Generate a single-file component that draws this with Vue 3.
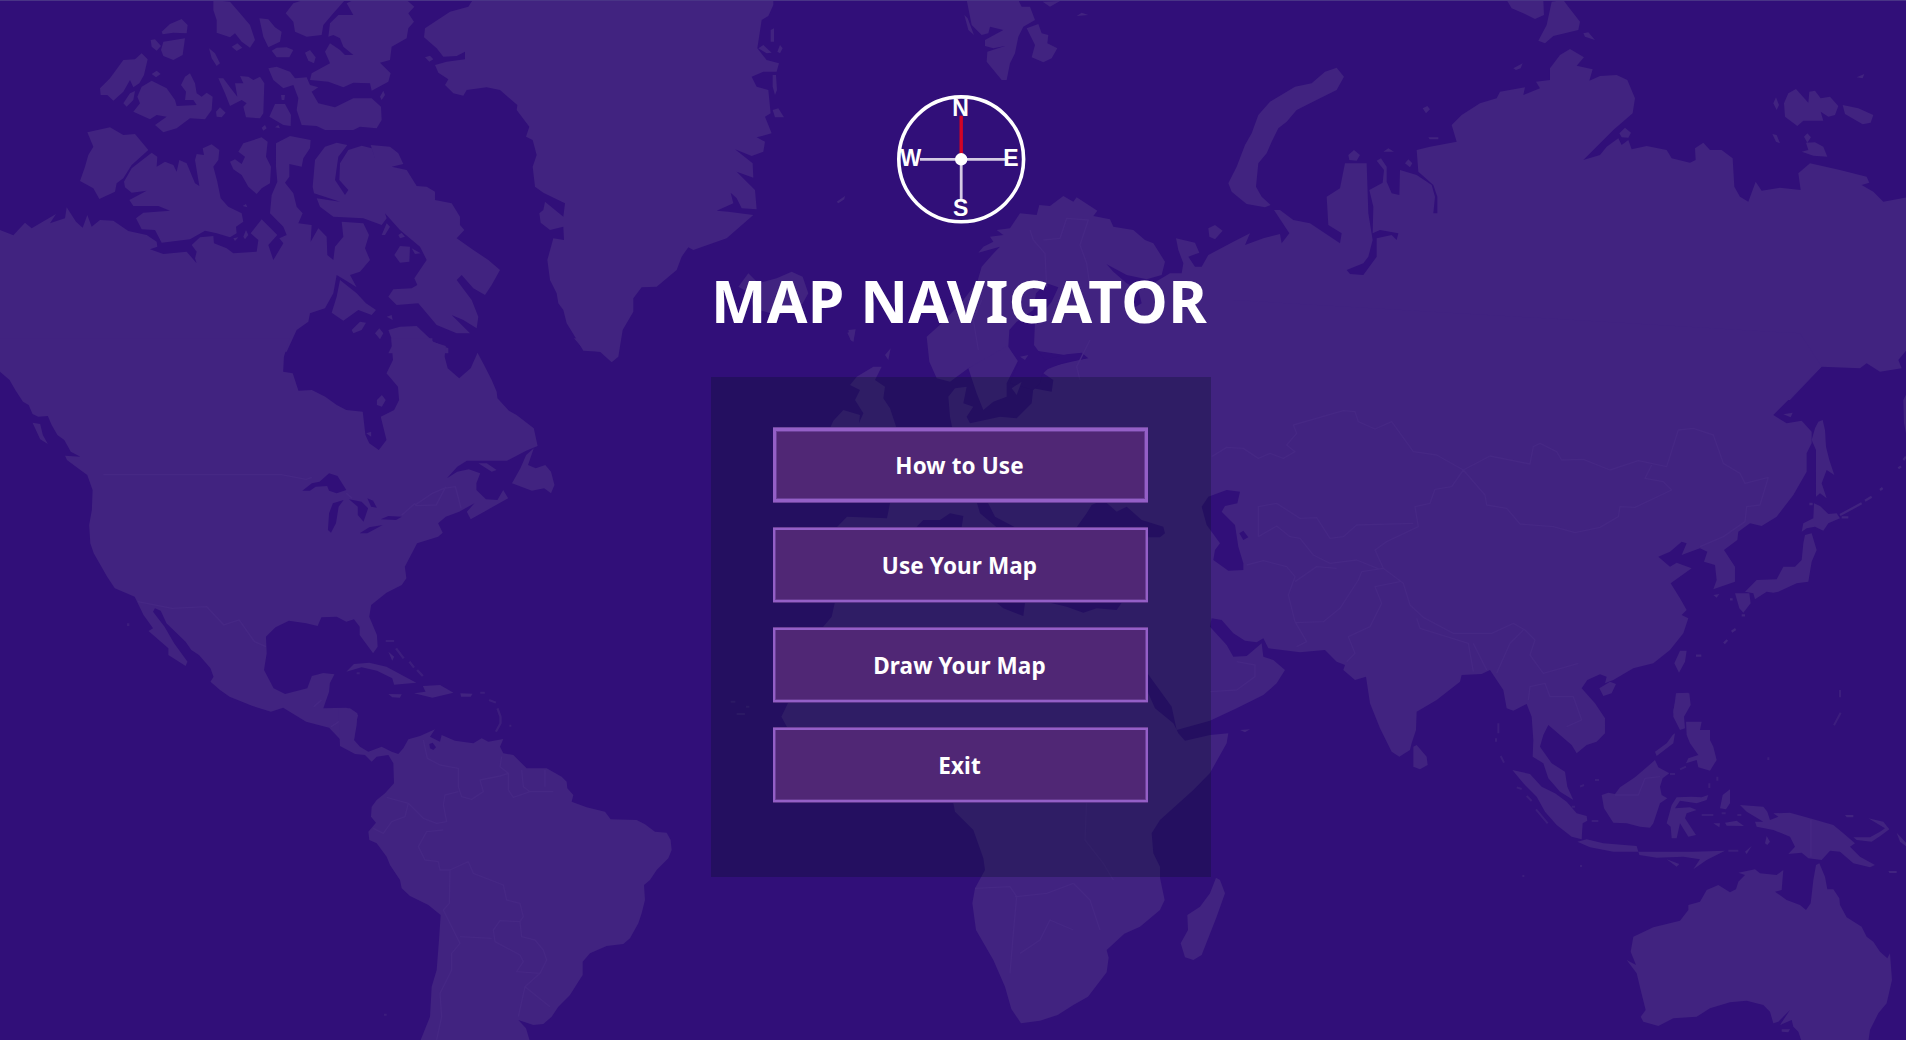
<script setup>
const items = [
  { label: 'How to Use', focused: true },
  { label: 'Use Your Map', focused: false },
  { label: 'Draw Your Map', focused: false },
  { label: 'Exit', focused: false }
]
</script>

<template>
  <main class="screen">
    <svg class="world" viewBox="0 0 1906 1040" aria-hidden="true">
      <!-- Arctic Canada -->
      <g class="land" transform="scale(.33333)">
        <path d="M640,0 690,5 720,40 750,75 765,120 750,143 725,125 705,100 690,112 650,98 650,60 640,30Z M778,55 805,58 825,82 845,95 840,125 805,142 790,110Z M485,95 510,72 545,57 563,75 560,100 520,98 488,103Z M490,125 555,115 548,165 520,180 490,168 483,150Z M452,120 465,118 483,138 470,152 455,140Z M300,265 330,235 370,180 405,178 425,160 443,178 432,225 418,250 400,262 390,240 370,275 340,302 322,285 302,285Z M370,310 390,280 405,273 400,300 380,320Z M455,222 470,212 482,222 468,232Z M400,335 420,310 412,290 425,260 455,242 500,265 525,300 530,318 590,315 580,300 555,300 558,275 543,255 555,230 570,220 585,250 590,280 605,290 620,278 638,290 635,330 615,358 570,355 530,385 490,397 465,375 500,350 470,345 450,358Z M627,145 645,160 660,190 650,198 635,175Z M695,140 712,130 727,143 710,153Z M815,152 830,143 860,142 880,150 868,172 830,172Z M915,158 930,150 947,172 942,190 925,182Z M655,235 670,235 690,262 712,290 705,250 730,250 720,228 745,230 760,240 780,230 793,250 790,340 780,355 738,352 730,320 740,310 725,300 690,318 675,280Z M648,335 660,322 677,338 665,352 650,350Z M805,205 830,200 870,215 885,235 920,232 930,255 955,262 935,275 955,310 1005,322 1060,295 1115,295 1143,320 1145,360 1130,385 1080,380 1060,390 975,390 950,378 905,375 890,330 895,295 880,255 850,265 820,240Z M808,350 825,312 855,312 873,345 872,378 850,375Z M843,285 855,285 853,300 845,300Z M785,383 795,375 800,385 790,392Z M825,382 835,375 840,385Z M857,40 880,10 910,0 1035,0 1000,40 970,75 965,105 920,110 885,95 880,65Z M985,110 990,70 1015,45 1060,45 1040,10 1060,0 1220,0 1243,20 1225,40 1242,65 1225,85 1220,115 1175,140 1170,180 1140,188 1172,220 1165,245 1115,272 1110,250 1060,248 1030,262 985,245 930,240 935,220 990,190 975,155 990,130 1020,150 1035,165 1060,165 1030,140 1020,115 1000,105Z M1140,290 1150,272 1155,285 1145,300Z"/>
        <path d="M262,397 330,382 370,405 405,402 445,450 395,495 370,535 350,550 345,575 298,597 280,565 240,543 255,500 265,465 280,440Z M372,545 395,505 455,458 472,470 470,500 495,485 520,495 530,515 538,480 560,490 585,550 598,558 585,480 590,462 612,465 608,445 635,433 658,450 655,480 640,500 652,545 662,595 685,620 725,640 730,665 708,680 710,700 690,712 650,700 615,692 570,718 485,728 465,690 425,688 408,655 430,638 510,632 475,618 400,618 388,600 440,572 395,578 375,562Z M690,485 705,478 725,492 735,470 715,455 730,430 785,412 803,425 798,470 813,500 810,550 785,565 770,582 745,560 725,525 700,508Z M828,430 870,408 932,420 930,445 910,475 905,500 868,492 868,530 855,548 880,580 890,620 908,640 895,670 935,675 932,725 955,685 980,710 982,765 1000,780 1005,740 1030,710 1025,665 1090,670 1107,705 1095,745 1110,780 1080,815 1050,825 1070,862 1035,840 1010,825 1000,880 975,925 930,940 925,965 890,990 860,1055 0,1055 0,690 40,706 75,668 95,685 168,642 150,670 195,655 200,622 228,665 248,683 262,645 275,680 300,660 340,662 385,693 440,705 470,725 472,740 450,748 490,762 560,755 590,790 600,822 585,775 590,755 575,735 600,712 640,708 642,730 680,745 700,760 770,755 775,720 752,700 785,658 832,705 805,735 820,780 850,730 838,715 860,705 850,680 810,640 815,585 832,545 828,500Z"/>
        <path d="M938,560 945,480 975,440 1010,428 1042,435 1015,470 1005,540 1035,585 1045,570 1018,540 1020,490 1045,450 1085,437 1115,445 1130,490 1112,435 1170,440 1195,460 1210,492 1175,500 1220,510 1250,558 1280,560 1305,575 1305,600 1355,610 1380,650 1380,675 1393,690 1370,715 1420,750 1465,780 1500,810 1475,855 1455,885 1420,865 1385,825 1370,840 1415,900 1435,950 1430,985 1390,960 1355,945 1410,1000 1370,1000 1310,975 1255,910 1190,915 1165,890 1180,868 1235,865 1252,855 1243,835 1280,780 1260,740 1200,690 1155,640 1160,655 1145,675 1090,655 1000,650 960,620 950,595 1020,605 942,580Z M1125,500 1160,500 1150,520 1125,520Z"/>
        <path d="M1183,765 1200,738 1230,740 1228,785 1200,788Z M995,938 1010,890 1020,840 1070,880 1098,910 1128,930 1115,945 1075,930 1030,962Z M1055,990 1080,965 1098,968 1085,990 1060,1000Z M1125,1000 1138,985 1150,1000 1140,1018Z M1165,1060 1180,1030 1165,990 1200,980 1250,978 1300,1025 1345,1045 1345,1060Z M1145,705 1160,670 1170,680 1155,705Z M1195,705 1205,698 1215,710 1200,715Z M1235,745 1262,760 1245,762Z M1160,950 1175,945 1178,960Z M730,710 738,690 745,705 735,718Z M700,715 715,712 705,723Z M728,618 738,612 742,622Z"/>
      </g>

      <!-- North America and Caribbean -->
      <g transform="translate(0 340) scale(.38265 .33333)">
        <path class="land" d="M0,-5 0,95 25,120 40,150 60,185 75,195 85,222 100,230 125,228 135,255 150,285 168,300 185,335 210,350 170,347 175,360 210,390 228,405 242,450 240,510 233,555 236,610 245,640 280,710 300,745 352,770 375,825 400,865 388,873 440,925 440,945 485,978 490,965 455,910 430,860 400,815 405,805 420,812 435,850 485,905 500,930 520,945 550,985 558,1010 550,1025 575,1050 600,1070 660,1098 708,1115 740,1103 800,1145 860,1163 895,1205 925,1205 928,1160 936,1125 905,1103 845,1105 860,1055 862,1030 874,1003 845,999 815,1008 803,1045 745,1062 715,1045 690,990 697,940 695,890 720,862 755,842 800,850 830,858 840,832 880,830 905,845 925,838 940,860 940,885 975,940 987,920 985,885 965,830 970,795 1010,758 1050,735 1062,715 1058,680 1090,610 1145,590 1157,578 1145,550 1165,530 1200,515 1240,490 1220,515 1230,538 1270,512 1328,475 1315,450 1300,480 1270,478 1245,450 1245,430 1255,400 1225,388 1195,395 1168,415 1195,380 1220,362 1325,362 1375,332 1405,318 1395,265 1350,225 1330,212 1300,175 1298,155 1285,120 1265,75 1248,38 1230,85 1200,115 1170,85 1162,50 1165,18 1130,5 1130,-5 1022,-5 1027,60 1010,100 1040,140 1043,180 1030,210 995,230 1010,300 990,330 965,310 955,285 948,215 905,210 880,195 850,170 815,150 780,152 765,100 740,95 742,50 757,-5Z M1395,325 1380,375 1400,385 1425,375 1440,395 1449,435 1440,460 1422,445 1390,452 1338,430 1360,385 1375,345Z M1250,370 1272,370 1298,390 1285,395Z M85,248 105,252 112,285 125,312 105,298Z M985,180 998,165 1008,180 998,200 985,195Z M957,280 970,275 970,290Z M905,995 925,972 965,968 1010,980 1050,1005 1088,1028 1030,1034 1025,1015 985,992 945,982Z M1082,1060 1112,1055 1105,1038 1150,1035 1185,1058 1130,1073Z M1015,1062 1050,1063 1045,1073 1025,1072Z M1203,1060 1235,1061 1230,1070 1205,1070Z M1015,935 1030,950 1025,962Z M1500,-5 1525,28 1568,35 1568,-5Z"/>
        <path class="islands thin" d="M1008,903h22M1035,925l20,30M1070,965l12,18M1090,990l15,18M1255,1058h12M1278,1080l18,8M1300,1105l8,25 0,20-12,25M335,850v8M932,1000h8"/>
        <path class="sea" d="M790,452 815,430 835,425 860,400 882,408 905,450 880,460 860,452 855,438 825,440 810,452Z M870,490 898,480 885,500 878,550 865,578 857,570 860,520Z M912,478 945,485 962,505 950,545 935,525 935,500Z M960,475 975,482 985,503 970,500Z M940,580 965,562 1000,555 960,580Z M995,538 1015,528 1050,530 1035,540Z"/>
        <path class="border" d="M270,404H735L800,418 815,412M905,460 920,475M1085,495 1130,460 1160,445 1190,440 1205,505M1085,497 1140,495 1165,440M1050,525 1085,490M360,785 450,805 540,800 585,855 625,840 665,905 695,920M820,1100 840,1080M865,1160 905,1130"/>
      </g>

      <!-- Greenland and Iceland -->
      <g class="land" transform="translate(400 0) scale(.33333)">
        <path d="M218,0 205,20 150,35 75,85 72,112 110,145 130,170 170,168 195,155 195,178 140,185 105,195 115,218 145,238 135,255 160,280 190,287 200,270 260,262 300,270 352,315 350,330 388,380 378,410 398,420 410,465 398,500 405,560 430,578 470,598 495,610 490,650 435,605 430,630 418,640 422,668 450,690 490,680 492,720 460,715 442,780 450,840 470,880 475,910 490,930 500,970 525,1010 550,1052 600,1055 635,1087 655,1070 668,990 700,935 700,895 725,862 770,860 830,810 845,770 865,742 880,750 980,715 1060,645 985,635 950,632 1000,610 992,578 1010,595 1025,625 1070,628 1065,570 1010,515 1060,533 1058,490 1005,448 1055,468 1090,455 1095,425 1070,412 1115,400 1095,350 1112,340 1105,270 1070,260 1055,230 1090,215 1130,215 1137,190 1100,180 1072,145 1085,60 1105,48 1120,15 1120,0Z M1112,90 1122,85 1122,125 1112,125Z M1075,145 1090,135 1115,158 1100,160Z M1132,155 1140,135 1148,145 1140,160Z M1118,225 1128,225 1131,270 1125,285 1118,260Z M1118,330 1135,325 1152,352 1125,352Z M1310,605 1335,588 1333,598 1315,610Z M75,172 90,167 100,178 88,185Z M1015,860 1045,820 1075,850 1130,835 1175,815 1208,830 1225,880 1200,925 1130,945 1060,925 1050,880Z M1342,998 1365,990 1360,1025 1352,1020Z"/>
      </g>

      <!-- South America -->
      <g transform="translate(340 640) scale(.33333)">
        <path class="land" d="M-5,205 30,205 52,220 50,255 42,300 60,320 85,335 125,320 155,335 175,342 190,325 205,298 240,288 285,268 270,290 300,305 305,285 345,302 400,310 425,295 445,305 490,297 480,320 490,340 520,345 560,385 620,385 665,410 680,425 682,445 700,465 695,485 740,502 795,515 812,538 890,540 915,553 945,575 980,578 992,600 995,630 985,655 950,690 930,720 912,735 915,780 905,820 895,850 870,895 850,912 800,918 750,940 728,965 728,1005 715,1025 690,1065 655,1100 635,1130 610,1152 580,1155 535,1140 558,1165 570,1205 240,1205 270,1130 275,1040 290,990 297,900 302,825 265,795 210,768 185,745 180,720 150,675 140,650 110,610 88,600 85,575 108,548 93,530 95,500 110,480 135,460 162,430 160,370 145,345 110,350 95,365 75,345 45,342 0,318Z"/>
        <path class="sea" d="M268,312 278,308 288,322 280,330 270,325Z"/>
        <path class="border" d="M250,300 262,355 300,375 355,385 355,440 365,470 395,478 430,455 420,420 480,408 505,400M485,350 480,380 505,400 505,450 520,472 570,455 640,455M545,390 550,440 570,455M615,390 615,440M355,455 315,465 310,495 320,545 290,550 250,535 205,490 140,472M205,490 195,530 155,545 130,580 100,565M310,570 260,575 235,620 255,660 295,665 300,690 330,690 385,665 400,700 490,735 500,780 540,790 550,830 540,845 480,842 460,870 465,905 540,945 550,965 530,995 600,1000 620,960 610,930 585,900 545,890 540,845M330,690 328,790 310,810 360,910 335,940 335,990 300,1060 305,1130 290,1200M360,890 455,895M600,1000 555,1040 630,1100M555,1040 535,1130"/>
        <path class="islands thin" d="M132,1124h8M508,257h6M1172,185h14M1190,222h25M1218,200h10"/>
      </g>

      <!-- Eurasia and Africa -->
      <g transform="translate(900 0) scale(.33333)">
        <path class="land" d="M205,1105 150,1145 110,1135 88,1085 80,1010 130,965 190,900 232,845 245,800 285,755 300,740 235,758 250,740 280,725 270,710 310,705 290,690 330,685 360,640 410,645 418,615 450,618 490,588 520,605 530,592 592,632 580,648 630,658 640,680 700,690 735,720 760,730 795,785 785,825 740,838 680,825 620,793 640,815 680,850 720,870 760,850 810,820 845,820 850,790 835,750 828,715 885,728 898,758 865,770 885,800 905,800 925,765 1000,725 1050,700 1035,735 1090,715 1140,702 1145,730 1168,700 1122,630 1140,630 1180,660 1230,670 1320,730 1325,700 1285,675 1280,590 1320,565 1335,490 1400,490 1405,640 1418,720 1405,770 1390,790 1340,810 1350,822 1390,825 1430,770 1430,715 1475,705 1490,720 1495,700 1440,690 1418,700 1420,620 1408,570 1448,548 1452,510 1430,482 1443,475 1460,500 1460,545 1475,580 1498,585 1500,510 1550,525 1595,555 1605,590 1600,640 1612,640 1612,590 1600,555 1555,515 1550,450 1590,440 1670,425 1655,375 1685,345 1740,310 1790,295 1800,275 1875,262 1870,285 1920,265 1908,245 1950,240 1950,205 1980,165 2010,147 2052,172 2030,197 2078,208 2068,242 2100,228 2150,225 2182,240 2205,295 2198,340 2140,390 2050,480 2100,465 2120,440 2155,415 2165,435 2185,420 2195,448 2240,438 2300,450 2315,475 2370,488 2387,480 2385,445 2410,428 2430,450 2465,450 2498,475 2503,560 2520,590 2545,605 2567,545 2585,572 2640,563 2702,570 2695,520 2730,490 2820,510 2900,530 2908,548 2885,555 2920,575 2950,605 3020,592 3020,1050 2995,1080 3005,1105 2940,1115 2900,1090 2880,1105 2765,1100 2670,1200 600,1260 700,900Z"/>
        <path class="land" d="M205,1105 230,1180 250,1230 280,1205 320,1190 320,1150 355,1080 325,1040 560,1075 450,1100 430,1120 460,1140 455,1175 400,1165 395,1210 350,1255 300,1250 210,1270 200,1250 220,1220 190,1210 200,1160 165,1165 145,1190 150,1250 160,1300 -30,1509 -39,1555 -159,1550 -189,1581 -196,1810 -205,1850 -231,1881 -336,2109 -356,2150 -339,2181 -250,2280 160,2410 165,2435 220,2490 250,2575 255,2610 225,2665 217,2710 228,2790 280,2880 315,2960 334,3027 363,3070 420,3062 473,3045 520,3015 564,2990 620,2917 626,2873 620,2850 673,2801 720,2780 780,2730 794,2700 780,2633 780,2600 760,2560 755,2500 780,2460 880,2370 930,2319 980,2230 985,2200 930,2205 855,2222 835,2200 820,2170 765,2125 745,2080 735,2010 775,2065 815,2120 830,2190 930,2162 1010,2125 1090,2085 1130,2050 1155,2010 1120,1980 1090,1970 1085,1930 1040,1968 1000,1970 980,1935 930,1880 935,1855 965,1860 1000,1900 1035,1922 1070,1927 1090,1915 1105,1945 1200,1957 1275,1950 1310,1985 1335,1995 1330,2010 1365,2040 1398,2030 1410,2110 1440,2185 1475,2255 1498,2270 1530,2250 1535,2230 1548,2190 1550,2135 1610,2100 1680,2045 1685,2025 1745,2022 1770,2010 1810,2070 1820,2125 1840,2132 1880,2112 1895,2150 1900,2220 1898,2270 1930,2290 1945,2335 1980,2375 2020,2400 2002,2360 1995,2315 1955,2290 1920,2240 1930,2205 1945,2175 1980,2205 2015,2235 2030,2260 2060,2235 2090,2225 2115,2200 2115,2155 2085,2110 2045,2065 2062,2040 2100,2023 2120,2030 2115,2050 2140,2040 2200,2005 2260,1990 2310,1950 2350,1900 2365,1855 2345,1845 2360,1830 2340,1795 2312,1750 2375,1705 2330,1688 2310,1700 2275,1670 2310,1655 2345,1625 2360,1630 2345,1665 2400,1645 2422,1655 2412,1685 2445,1695 2450,1740 2440,1768 2505,1745 2505,1700 2472,1650 2512,1620 2515,1595 2550,1570 2585,1578 2630,1550 2680,1485 2720,1415 2720,1360 2735,1330 2735,1295 2705,1262 2660,1270 2620,1245 2725,1140 2765,1100 2700,1000 1000,900 560,900Z"/>
        <!-- Inland waters -->
        <path class="sea" d="M325,1040 328,990 350,965 400,930 408,880 440,850 475,862 455,905 405,965 402,1035 435,1080 500,1063 545,1058 565,1075 500,1085 430,1112 420,1150 400,1170 330,1150 355,1085Z M690,870 715,870 725,910 700,925Z"/>
        <path class="sea" d="M50,1580 70,1560 120,1560 150,1540 190,1548 185,1582Z M230,1505 240,1540 290,1582 345,1582 285,1550 262,1505Z M530,1582 560,1540 575,1515 610,1500 650,1535 680,1520 725,1560 790,1580 795,1600 780,1612 745,1612 740,1580Z M290,1808 375,1808 370,1848 310,1825Z M450,1808 665,1808 650,1830 590,1825 550,1838 500,1820Z"/>
        <path class="sea" d="M905,1520 925,1490 980,1470 1020,1475 1012,1510 975,1518 965,1535 1005,1575 1015,1640 1030,1690 1030,1710 985,1712 940,1680 945,1650 960,1630 920,1575Z M1018,1600 1030,1592 1045,1612 1030,1620Z"/>
        <!-- Islands around the continent -->
        <path class="land" d="M200,0 355,0 365,20 390,20 405,60 370,80 355,110 345,160 330,190 320,240 305,240 260,185 262,155 315,138 280,145 255,138 255,120 310,90 270,80 265,100 245,105 215,75Z M380,85 415,72 425,100 445,105 442,130 472,145 455,175 430,187 395,172 405,135Z M193,45 203,55 222,105 205,90Z M428,5 480,3 450,20Z M530,48 545,38 565,45Z M985,550 1010,500 1035,435 1055,400 1075,345 1110,305 1185,260 1235,250 1275,215 1310,203 1332,230 1310,270 1260,295 1190,330 1160,365 1135,385 1115,425 1100,460 1075,490 1068,560 1085,590 1112,615 1095,622 1040,612 1025,600 995,575Z M925,685 945,675 968,692 945,718 928,710Z M1345,465 1362,450 1380,465 1370,482 1348,480Z M1450,455 1465,445 1482,455Z M1820,0 1930,0 1932,45 1905,57 1875,42 1835,25Z M1955,5 1990,0 2005,20 2040,65 2035,90 1960,108 1935,130 1915,122 1940,75Z M2050,100 2065,97 2085,120 2055,110Z M1840,205 1868,190 1862,205 1848,210Z M1568,325 1582,318 1590,328 1578,340Z M1515,490 1525,478 1537,490 1530,502Z M1585,412h30v6h-26Z M2158,400 2175,383 2193,398 2185,413 2165,412Z"/>
        <path class="land" d="M2620,310 2628,292 2637,315 2630,330Z M2652,310 2665,280 2688,267 2725,308 2728,275 2745,272 2762,295 2790,290 2815,318 2805,345 2785,350 2762,335 2770,362 2710,362 2692,378 2655,350Z M2828,315 2875,325 2920,345 2912,368 2888,373 2835,342Z M2712,410 2722,400 2733,412 2722,428Z M2705,455 2725,450 2718,428 2745,427 2770,440 2782,470 2740,467Z M2617,402 2630,405 2640,430 2628,425Z M2870,232 2893,222 2888,235Z M2650,1243 2678,1238 2672,1252Z"/>
        <path class="land" d="M-80,1100 -55,1100 -75,1140 -45,1160 -50,1195 -30,1225 -10,1285 -130,1285 -110,1240 -135,1200 -120,1170 -150,1155 -130,1130Z M-210,1285 -200,1262 -170,1230 -120,1245 -125,1285Z M-45,1065 -28,1045 -35,1080Z M-155,990 -133,988 -140,1025 -148,1020Z M360,1070 385,1065 375,1080Z M335,1165 365,1145 350,1185Z"/>
        <path class="land" d="M948,2633 960,2640 975,2680 950,2750 905,2865 880,2880 855,2872 842,2830 864,2790 862,2745 900,2720 930,2680Z M1540,2240 1550,2235 1580,2270 1583,2295 1560,2308 1540,2300Z M1020,2190 1050,2188 1035,2197Z"/>
        <path class="border" d="M935,1370 980,1342 1030,1345 1075,1375 1110,1360 1150,1375 1185,1355 1160,1335 1190,1300 1180,1275 1330,1232 1365,1235 1375,1265 1425,1287 1475,1265 1540,1355 1610,1365 1690,1410 1770,1368 1890,1392 1900,1340 1920,1330 1970,1355 1985,1380 2050,1378 2130,1410 2215,1382 2300,1400 2335,1290 2380,1285 2440,1305 2470,1390 2520,1420 2535,1450 2605,1432 2580,1515 2540,1520 2535,1565 2470,1610 2400,1640"/>
        <path class="border" d="M1690,1410 1755,1485 1760,1515 1820,1525 1860,1572 1960,1580 2025,1598 2100,1582 2155,1550 2160,1520 2205,1522 2315,1470 2290,1445 2235,1435 2255,1395M1690,1410 1655,1460 1605,1468 1590,1510 1545,1520 1555,1580 1460,1625 1425,1650 1450,1705 1510,1750 1530,1815 1570,1852 1660,1900 1775,1900 1840,1870 1875,1890 1905,1920 1890,1965 1930,2020 2035,1990M1075,1610V1520L1130,1510 1200,1555 1250,1553 1290,1615 1330,1610 1370,1575 1540,1570M1075,1610 1130,1578 1170,1610 1200,1615 1240,1665 1290,1690 1370,1680 1440,1708M1040,1695 1090,1682 1160,1700 1185,1730 1165,1785 1185,1865 1220,1925 1190,1940M1185,1745 1250,1700 1310,1705M1185,1868 1270,1865 1320,1825 1375,1740 1385,1715 1450,1705M1340,1985 1365,1960 1345,1910 1410,1880 1445,1810 1425,1760 1500,1745M1550,1855 1560,1885 1705,1930 1720,2015M1720,1930 1760,2010M1790,2020 1830,1930 1870,1890M1885,2100 1890,2060 1935,2050 1950,2090 2020,2090 2045,2160 2000,2180M930,2075 1010,2070 1065,2030 1065,1995 1010,1985"/>
        <path class="border" d="M440,860 435,760 400,720 390,690M570,860 560,790 540,735 565,660 500,655 480,715 430,720M235,1050 220,960 245,900M540,1140 530,1100 570,1020M225,2665 330,2660 350,2690 340,2800 330,2920M345,2690 440,2680 520,2650M520,2790 450,2760 420,2820 360,2860M520,2650 570,2700 600,2790M560,2400 555,2520 610,2590 640,2640"/>
      </g>

      <!-- Japan and Sakhalin -->
      <g transform="translate(1500 380) scale(.33333)">
        <path class="land" d="M955,125 968,120 975,150 978,200 988,240 1003,285 980,270 965,310 980,355 960,340 948,350 948,210 935,180 945,145Z M942,370 960,378 985,402 1010,400 1020,415 985,430 970,452 945,440 920,445 905,455 910,430 940,415Z M915,465 935,460 950,510 935,545 925,605 890,610 835,635 820,638 800,635 765,658 760,640 735,635 770,600 830,598 850,560 885,560 905,540 910,490Z M705,640 748,640 752,670 730,698 718,685Z M523,850 540,812 560,812 555,845 537,878Z M298,925 330,905 348,912 335,940 310,948Z M528,940 565,938 570,975 555,1000 520,1000Z M640,645 658,642 650,653Z M1210,60 1220,40V170L1212,130Z"/>
        <path class="islands" d="M1020,405 1085,370M1095,362 1115,350M1140,330l8-6M1195,265l8-6M1210,240l8-10M1025,412h20M672,790l10-10M695,755l12-8M588,827h16M690,658h8M725,706h10M928,372h10"/>
      </g>

      <!-- Southeast Asia and Australia -->
      <g transform="translate(1480 680) scale(.33333)">
        <path class="land" d="M97,270 150,282 185,320 225,340 260,365 290,400 320,408 322,422 308,430 305,478 275,470 230,435 195,395 170,350 130,310Z M292,485 320,478 370,490 470,498 475,515 400,515 330,502Z M475,515 640,515 735,512 680,540 640,568 660,538 610,530 530,533 478,525Z M560,538 598,552 590,560Z M365,345 385,338 405,342 420,322 465,292 500,262 525,240 535,262 568,280 548,295 540,320 545,345 562,355 540,370 520,430 510,443 480,440 440,430 400,428 372,385Z M525,215 560,190 578,165 585,160 580,190 530,228Z M575,375 590,352 635,350 665,352 685,345 680,360 650,370 600,362 585,385 630,382 650,390 620,400 615,415 648,465 625,470 600,430 590,475 575,475 572,440 560,430Z M580,90 592,40 628,40 632,75 612,110 615,145 600,150 580,110Z M618,125 665,125 660,150 690,150 690,180 700,200 710,240 690,272 655,262 650,240 618,250 625,235 655,225 630,190 620,165Z M720,385 728,345 750,328 750,370 738,388Z M700,430 720,430 718,442Z M735,428 770,422 792,438 740,437Z M855,490 860,468 870,485 862,495Z M795,515 815,498 800,522Z"/>
        <path class="land" d="M780,375 850,380 862,395 870,420 895,410 880,400 930,398 1000,418 1060,435 1090,460 1125,490 1110,500 1140,530 1185,555 1170,562 1120,550 1080,515 1050,512 1025,540 985,535 965,518 925,522 945,500 930,470 880,450 830,440 825,425 850,425 800,395Z M1120,472 1170,472 1200,455 1215,445 1165,415 1210,425 1228,448 1205,465 1175,485 1130,480Z M1250,458 1280,490V500L1260,485Z M1225,573h25v6h-22Z M1095,405h25v7h-20Z"/>
        <path class="land" d="M440,840 468,855 452,815 460,770 520,742 600,722 625,690 625,675 660,665 680,630 715,615 750,637 768,628 775,605 795,585 775,578 825,568 840,580 890,585 910,570 905,630 885,635 920,660 960,675 978,690 992,670 1000,600 1008,555 1018,550 1035,590 1042,628 1060,628 1078,655 1080,675 1100,712 1145,740 1160,770 1180,785 1200,815 1222,835 1230,820 1236,900 1220,970 1195,1000 1170,1050 1165,1085 965,1085 955,1055 940,1040 935,1020 900,1035 930,990 895,1025 880,1030 870,995 850,975 800,962 750,967 690,985 650,1010 580,1015 535,1038 490,1025 482,1010 497,990 482,930 470,880Z M905,1048 930,1048 925,1057 905,1055Z"/>
        <path class="islands thin" d="M55,130v30M48,175v10M62,228l10,20M110,322l15,5M140,348l15,15M168,388l35,42M335,423h20M345,300h12M300,320l12-5M275,380h10M665,405h35M725,400h12M772,405h12M570,282h15M600,268l18-8M712,290v12M688,310v14M1080,30v22M1082,98l-20,38M865,232v8M300,558h6M130,585v6M745,512h30"/>
        <path class="border" d="M405,345 475,345 495,295 540,290M993,420V530"/>
      </g>
      <path class="edge" d="M0,.5H1906" />
    </svg>

    <div class="content">
      <svg class="compass" width="140" height="140" viewBox="0 0 140 140" role="img" aria-label="Compass">
        <circle cx="70.2" cy="69.3" r="62.4" fill="none" stroke="#fff" stroke-width="3.6" />
        <path d="M29,69.3h85M70.2,69.3v41" stroke="#d5cbe4" stroke-width="2.8" />
        <path d="M70.2,69.3v-43.6" stroke="#d40425" stroke-width="3.4" />
        <circle cx="70.2" cy="69.3" r="6.2" fill="#fff" />
        <g class="points">
          <text x="69.5" y="25.7">N</text>
          <text x="120" y="75.7">E</text>
          <text x="69.7" y="125.7">S</text>
          <text x="19.8" y="75.7" textLength="21" lengthAdjust="spacingAndGlyphs">W</text>
        </g>
      </svg>
      <h1>MAP NAVIGATOR</h1>
      <nav class="menu">
        <button v-for="item in items" :key="item.label" :class="{ focused: item.focused }">
          <span>{{ item.label }}</span>
        </button>
      </nav>
    </div>
  </main>
</template>

<style>
body {
  background: #310f79;
}
</style>

<style scoped>
.screen {
  display: grid;
  width: 1906px;
  height: 1040px;
  overflow: hidden;
  background: #310f79;
}
.world,
.content {
  grid-area: 1 / 1;
}
.world {
  display: block;
  width: 1906px;
  height: 1040px;
}
.land {
  fill: #412380;
}
.sea {
  fill: #310f79;
}
.islands {
  fill: none;
  stroke: #412380;
  stroke-width: 7;
}
.islands.thin {
  stroke-width: 6;
  stroke-opacity: 0.7;
}
.border {
  fill: none;
  stroke: #462884;
  stroke-width: 4;
  stroke-linejoin: round;
}
.edge {
  stroke: #493486;
}
.content {
  z-index: 1;
  display: flex;
  flex-direction: column;
  align-items: center;
  width: 500px;
  margin-left: 711px;
  padding-top: 90px;
}
.compass {
  display: block;
  flex: none;
}
.points {
  fill: #fff;
  font: bold 23px 'Liberation Sans', Arial, sans-serif;
  text-anchor: middle;
}
h1 {
  width: 500px;
  height: 80px;
  margin: 30px 0 37px;
  padding-right: 7px;
  box-sizing: border-box;
  color: #fff;
  font: 700 58.8px/80px 'Noto Sans', 'Open Sans', sans-serif;
  letter-spacing: 0.3px;
  text-align: center;
  white-space: nowrap;
}
.menu {
  display: flex;
  flex-direction: column;
  align-items: center;
  gap: 26px;
  width: 500px;
  height: 500px;
  padding: 51px 1px 0 0;
  box-sizing: border-box;
  background: rgba(6, 18, 40, 0.3);
}
button {
  flex: none;
  width: 375px;
  height: 74px;
  padding: 2px 2px 0 0;
  border: 2px solid #945fc7;
  border-radius: 0;
  background: #502775;
  color: #fff;
  font: 700 22.5px/30px 'Noto Sans', 'Open Sans', sans-serif;
  letter-spacing: 0.1px;
  box-shadow:
    0 -1px #6f4199,
    0 1px #5b3589,
    inset 1px 0 #6d4199,
    inset -1px 0 #6d4199,
    inset 0 -1px #653a8e;
}
button.focused {
  border-width: 3px;
  box-shadow:
    0 -1px #7248a0,
    0 1px #6a4099,
    inset 0 0 0 1px #6b3f98;
}
</style>
